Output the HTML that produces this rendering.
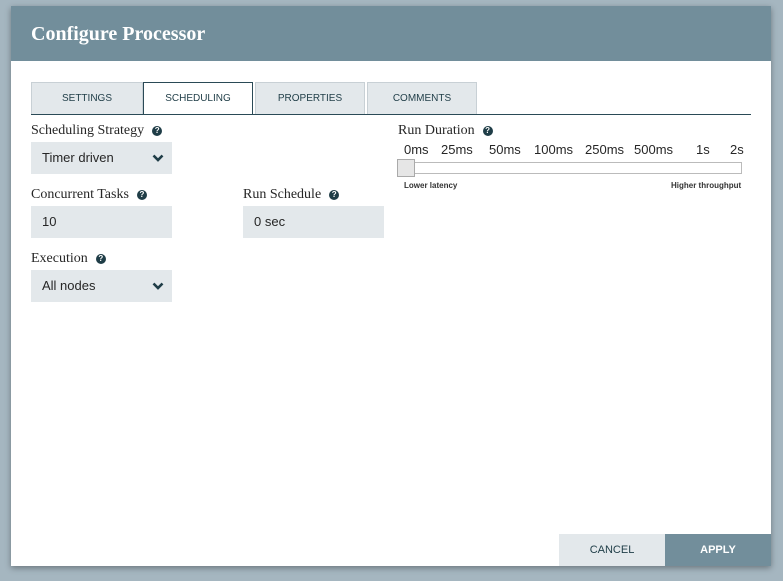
<!DOCTYPE html>
<html><head><style>
body{margin:0;width:783px;height:581px;background:#a5b6c0;position:relative;overflow:hidden;font-family:"Liberation Sans",sans-serif}
.dlg{position:absolute;left:11px;top:6px;width:760px;height:560px;background:#fff;box-shadow:0 2px 6px rgba(0,0,0,.35)}
.hdr{position:absolute;left:0;top:0;width:760px;height:55px;background:#728e9b;color:#fff;font-family:"Liberation Serif",serif;font-weight:bold;font-size:20px;line-height:56px;padding-left:20px;box-sizing:border-box}
.tab{position:absolute;top:76px;height:32px;background:#e3e8eb;border:1px solid #c8d0d5;border-bottom:none;box-sizing:border-box;font-size:10px;text-align:center;line-height:32px;color:#1f3d47}
.tab.a{background:#fff;border:1px solid #2a4a56;border-bottom:none;height:33px}
.line{position:absolute;left:20px;top:108px;width:720px;height:1px;background:#2a4a56}
.lbl{position:absolute;font-family:"Liberation Serif",serif;font-size:14px;color:#262626}
.q{display:inline-block;width:10px;height:10px;border-radius:50%;background:#1f3d47;color:#fff;font-family:"Liberation Sans";font-size:8px;font-weight:bold;text-align:center;line-height:10px;margin-left:8px;vertical-align:1px}
.in{position:absolute;width:141px;height:32px;background:#e3e8eb;font-size:13px;color:#262626;line-height:32px;padding-left:11px;box-sizing:border-box}
.chev{position:absolute;right:8px;top:11px}
.tk{position:absolute;top:136px;font-size:13px;color:#262626}
.btn{position:absolute;top:528px;width:106px;height:32px;font-size:11px;text-align:center;line-height:32px}
</style></head><body>
<div class="dlg">
<div class="hdr">Configure Processor</div>
<div class="tab" style="left:20px;width:112px">SETTINGS</div>
<div class="tab a" style="left:132px;width:110px">SCHEDULING</div>
<div class="tab" style="left:244px;width:110px">PROPERTIES</div>
<div class="tab" style="left:356px;width:110px">COMMENTS</div>
<div class="line"></div>
<div class="lbl" style="left:20px;top:117px">Scheduling Strategy<span class="q">?</span></div>
<div class="in" style="left:20px;top:136px">Timer driven<svg class="chev" width="12" height="10" viewBox="0 0 12 10"><path d="M1.5 2.5L6 7 10.5 2.5" stroke="#1f3d47" stroke-width="2.6" fill="none"/></svg></div>
<div class="lbl" style="left:20px;top:181px">Concurrent Tasks<span class="q">?</span></div>
<div class="in" style="left:20px;top:200px">10</div>
<div class="lbl" style="left:232px;top:181px">Run Schedule<span class="q">?</span></div>
<div class="in" style="left:232px;top:200px">0 sec</div>
<div class="lbl" style="left:20px;top:245px">Execution<span class="q">?</span></div>
<div class="in" style="left:20px;top:264px">All nodes<svg class="chev" width="12" height="10" viewBox="0 0 12 10"><path d="M1.5 2.5L6 7 10.5 2.5" stroke="#1f3d47" stroke-width="2.6" fill="none"/></svg></div>
<div class="lbl" style="left:387px;top:117px">Run Duration<span class="q">?</span></div>
<div class="tk" style="left:393px">0ms</div><div class="tk" style="left:430px">25ms</div><div class="tk" style="left:478px">50ms</div><div class="tk" style="left:523px">100ms</div><div class="tk" style="left:574px">250ms</div><div class="tk" style="left:623px">500ms</div><div class="tk" style="left:685px">1s</div><div class="tk" style="left:719px">2s</div>
<div style="position:absolute;left:388px;top:156px;width:343px;height:12px;border:1px solid #bbb;box-sizing:border-box"></div>
<div style="position:absolute;left:386px;top:153px;width:18px;height:18px;background:#e6e6e6;border:1px solid #aaa;box-sizing:border-box"></div>
<div style="position:absolute;left:393px;top:175px;font-size:8px;font-weight:bold;color:#333">Lower latency</div>
<div style="position:absolute;left:660px;top:175px;font-size:8px;font-weight:bold;color:#333">Higher throughput</div>
<div class="btn" style="left:548px;background:#e3e8eb;color:#1f3d47">CANCEL</div>
<div class="btn" style="left:654px;background:#728e9b;color:#fff;font-weight:bold">APPLY</div>
</div>
</body></html>
